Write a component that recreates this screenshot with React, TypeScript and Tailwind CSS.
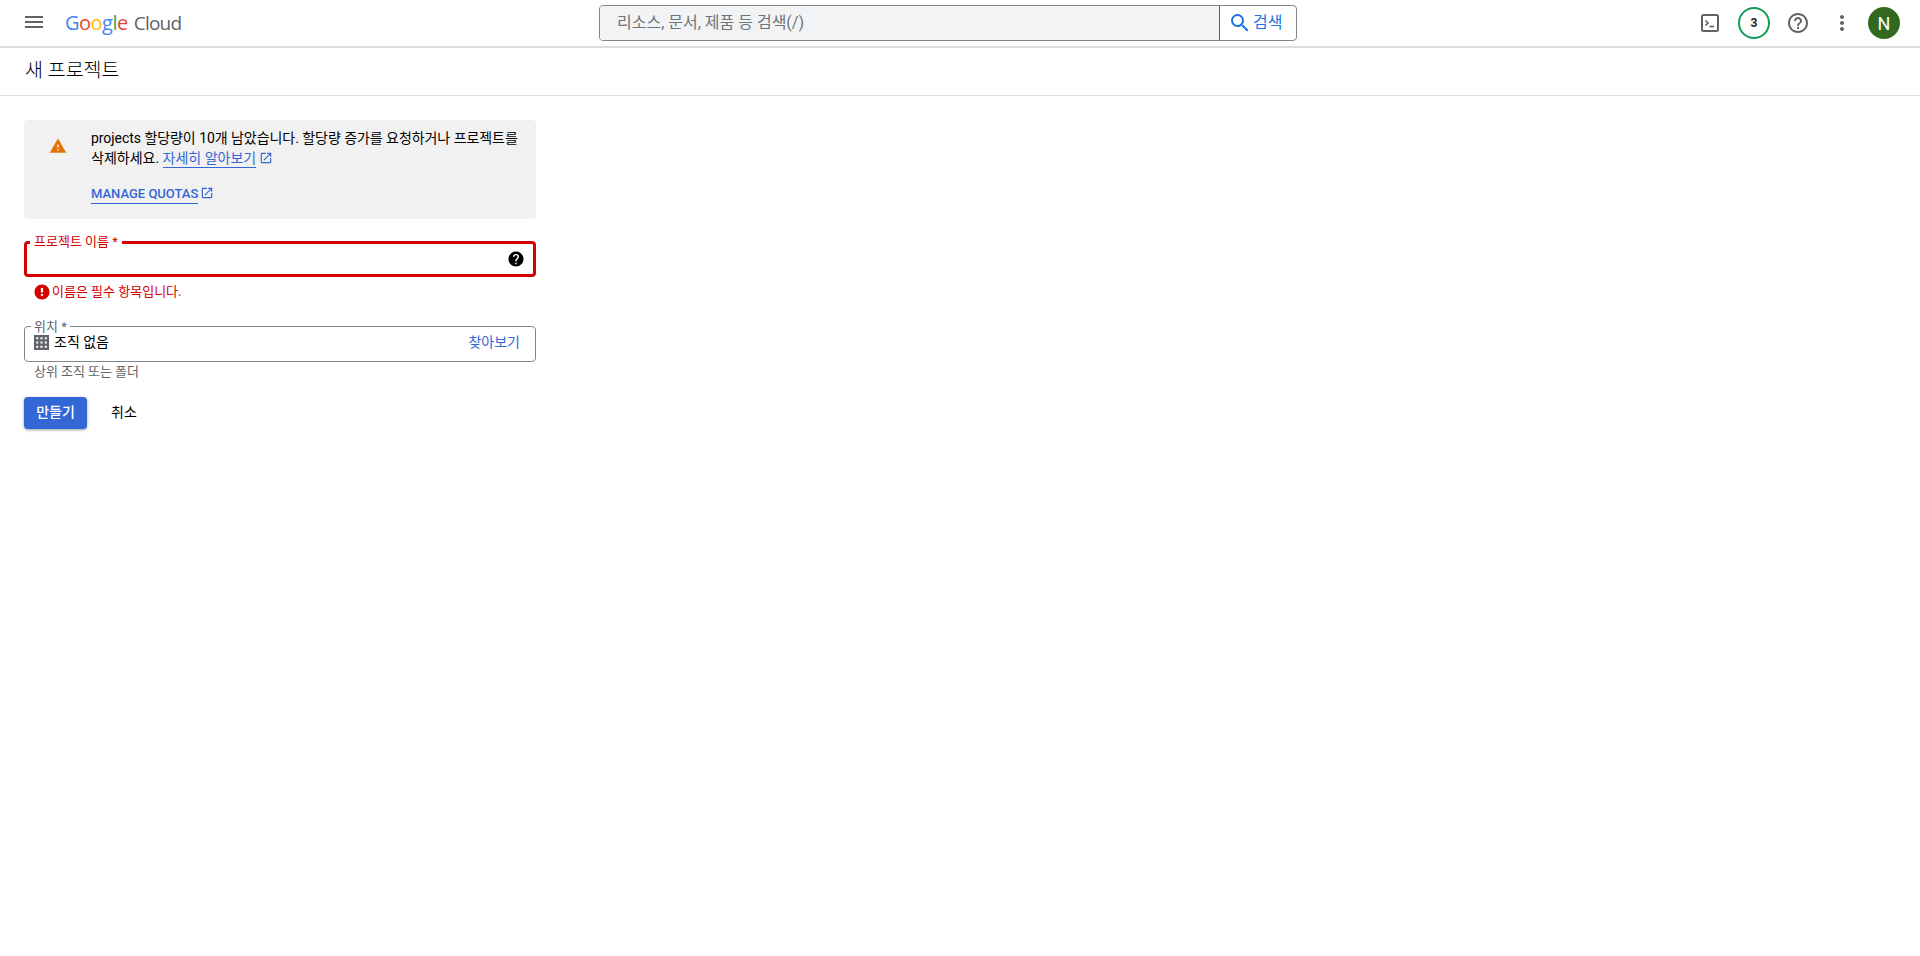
import React from "react";

const F = "font-['Roboto','Noto_Sans_CJK_KR',sans-serif]";

function Ext({ size = 14 }: { size?: number }) {
  return (
    <svg width={size} height={size} viewBox="0 0 24 24" fill="#3367d6" className="shrink-0">
      <path d="M19 19H5V5h7V3H5a2 2 0 0 0-2 2v14a2 2 0 0 0 2 2h14c1.1 0 2-.9 2-2v-7h-2v7zM14 3v2h3.59l-9.83 9.83 1.41 1.41L19 6.41V10h2V3h-7z" />
    </svg>
  );
}

function Slot({ children }: { children: React.ReactNode }) {
  return <div className="flex h-[44px] w-[44px] items-center justify-center">{children}</div>;
}

export default function App() {
  return (
    <div className={`${F} min-h-[956px] bg-white text-[14px] text-black`}>
      <header className="flex h-[48px] items-center border-b-2 border-[#dadce0]">
        <button className="ml-[24px] mb-[2px] flex h-[18px] w-[20px] items-center">
          <svg width="20" height="14" viewBox="0 0 20 14" fill="#5f6368">
            <rect x="1" y="1" width="18" height="2" />
            <rect x="1" y="6" width="18" height="2" />
            <rect x="1" y="11" width="18" height="2" />
          </svg>
        </button>
        <div className="ml-[21px] flex w-[116px] items-baseline text-[20px] leading-none font-['Open_Sans',sans-serif] tracking-[-0.5px]">
          <span className="text-[#4285f4]">G</span>
          <span className="text-[#ea4335]">o</span>
          <span className="text-[#fbbc05]">o</span>
          <span className="text-[#4285f4]">g</span>
          <span className="text-[#34a853]">l</span>
          <span className="text-[#ea4335]">e</span>
          <span className="ml-[6px] text-[19px] text-[#5f6368] tracking-[-0.8px]">Cloud</span>
        </div>
        <div className="ml-[418px] flex h-[36px] w-[698px] overflow-hidden rounded-[4px] border border-[#80868b]">
          <div className="flex flex-1 items-center bg-[#f1f3f4] pl-[17px] text-[16px] text-[#6f7478]">
            리소스, 문서, 제품 등 검색(/)
          </div>
          <div className="flex w-[77px] items-center border-l border-[#5f6368] pl-[10px] text-[16px] text-[#1a73e8]">
            <svg width="24" height="24" viewBox="0 0 24 24" fill="#1a73e8" className="shrink-0 -ml-[2px]">
              <path d="M15.5 14h-.79l-.28-.27A6.47 6.47 0 0 0 16 9.5 6.5 6.5 0 1 0 9.5 16c1.61 0 3.09-.59 4.23-1.57l.27.28v.79l5 4.99L20.49 19l-4.99-5zm-6 0C7.01 14 5 11.99 5 9.5S7.01 5 9.5 5 14 7.01 14 9.5 11.99 14 9.5 14z" />
            </svg>
            <span className="ml-[1px] whitespace-nowrap">검색</span>
          </div>
        </div>
        <div className="ml-auto flex items-center pr-[16px]">
          <Slot>
            <svg width="24" height="24" viewBox="0 0 24 24" fill="none" stroke="#5f6368" strokeWidth="2">
              <rect x="4" y="4" width="16" height="16" rx="1.5" />
              <path d="M7.5 9.5l2.5 2.5-2.5 2.5" strokeWidth="1.6" />
              <path d="M11.5 15.5h4.5" strokeWidth="1.6" />
            </svg>
          </Slot>
          <Slot>
            <div className="flex h-[32px] w-[32px] items-center justify-center rounded-full border-2 border-[#0f9d58] text-[12px] font-bold text-[#202124]">3</div>
          </Slot>
          <Slot>
            <svg width="24" height="24" viewBox="0 0 24 24" fill="#5f6368">
              <path d="M11 18h2v-2h-2v2zm1-16C6.48 2 2 6.48 2 12s4.48 10 10 10 10-4.48 10-10S17.52 2 12 2zm0 18c-4.41 0-8-3.59-8-8s3.59-8 8-8 8 3.59 8 8-3.59 8-8 8zm0-14c-2.21 0-4 1.79-4 4h2c0-1.1.9-2 2-2s2 .9 2 2c0 2-3 1.75-3 5h2c0-2.25 3-2.5 3-5 0-2.21-1.79-4-4-4z" />
            </svg>
          </Slot>
          <Slot>
            <svg width="24" height="24" viewBox="0 0 24 24" fill="#5f6368">
              <path d="M12 8c1.1 0 2-.9 2-2s-.9-2-2-2-2 .9-2 2 .9 2 2 2zm0 2c-1.1 0-2 .9-2 2s.9 2 2 2 2-.9 2-2-.9-2-2-2zm0 6c-1.1 0-2 .9-2 2s.9 2 2 2 2-.9 2-2-.9-2-2-2z" />
            </svg>
          </Slot>
          <div className="flex h-[44px] w-[40px] items-center justify-center">
            <div className="flex h-[32px] w-[32px] shrink-0 items-center justify-center rounded-full bg-[#33691e] text-[18px] text-white">N</div>
          </div>
        </div>
      </header>

      <div className="flex h-[48px] items-center border-b border-[#dadce0] pl-[25px] pb-[2px] text-[19.5px] font-light">새 프로젝트</div>

      <main className="ml-[24px] mt-[24px] w-[512px]">
        <div className="flex h-[99px] rounded-[4px] bg-[#f1f1f1]">
          <div className="ml-[25px] mt-[17px] w-[42px] shrink-0">
            <svg width="18" height="18" viewBox="0 0 24 24" fill="#e37400">
              <path d="M1 21h22L12 2 1 21zm12-3h-2v-2h2v2zm0-4h-2v-4h2v4z" />
            </svg>
          </div>
          <div className="pt-[8px] leading-[20px]">
            <p className="whitespace-nowrap tracking-[-0.05px]">projects 할당량이 10개 남았습니다. 할당량 증가를 요청하거나 프로젝트를</p>
            <p className="flex items-center">
              삭제하세요.&nbsp;
              <span className="border-b border-[#3367d6] leading-[18px] text-[#3367d6]">자세히 알아보기</span>
              <span className="ml-[3px]"><Ext /></span>
            </p>
            <p className="mt-[17px] flex items-start text-[13px] font-medium text-[#3367d6]">
              <span className="border-b border-[#3367d6] leading-[18px]">MANAGE QUOTAS</span>
              <span className="ml-[2px] mt-[1px]"><Ext /></span>
            </p>
          </div>
        </div>

        <div className="relative mt-[22px] flex h-[36px] items-center justify-end rounded-[4px] border-[3px] border-[#d50000] pr-[8px]">
          <span className="absolute left-[3px] top-[-9px] bg-white px-[4px] text-[13px] leading-[14px] text-[#d50000]">프로젝트 이름 *</span>
          <svg width="18" height="18" viewBox="0 0 24 24" fill="#000">
            <path d="M12 2C6.48 2 2 6.48 2 12s4.48 10 10 10 10-4.48 10-10S17.52 2 12 2zm1 17h-2v-2h2v2zm2.07-7.75l-.9.92C13.45 12.9 13 13.5 13 15h-2v-.5c0-1.1.45-2.1 1.17-2.83l1.24-1.26c.37-.36.59-.86.59-1.41 0-1.1-.9-2-2-2s-2 .9-2 2H8c0-2.21 1.79-4 4-4s4 1.79 4 4c0 .88-.36 1.68-.93 2.25z" />
          </svg>
        </div>
        <div className="mt-[7px] flex h-[16px] items-center pl-[9px] text-[13px] text-[#d50000]">
          <svg width="18" height="18" viewBox="0 0 24 24" fill="#d50000" className="mr-[1px] shrink-0">
            <path d="M12 2C6.48 2 2 6.48 2 12s4.48 10 10 10 10-4.48 10-10S17.52 2 12 2zm1.5 15h-3v-2.5h3V17zm0-4.5h-3V6.5h3v6z" />
          </svg>
          이름은 필수 항목입니다.
        </div>

        <div className="relative mt-[26px] flex h-[36px] rounded-[4px] border border-[#80868b] pl-[9px] pr-[15px] pt-[5px] leading-[20px]">
          <span className="absolute left-[6px] top-[-7px] bg-white px-[3px] text-[13px] leading-[14px] text-[#5f6368]">위치 *</span>
          <svg width="15" height="15" viewBox="0 0 14 14" className="mr-[5px] mt-[3px] shrink-0">
            <rect width="14" height="14" fill="#5f6368" />
            {[2, 6, 10].flatMap((x) => [3, 7, 11].map((y) => <rect key={`${x}-${y}`} x={x} y={y - 1} width="2" height="2" fill="#f1f1f1" />))}
          </svg>
          <span>조직 없음</span>
          <span className="ml-auto text-[#3367d6]">찾아보기</span>
        </div>
        <div className="mt-[2px] pl-[10px] text-[13px] leading-[16px] tracking-[-0.05px] text-[#5f6368]">상위 조직 또는 폴더</div>

        <div className="mt-[17px] flex items-center">
          <button className="h-[32px] w-[63px] rounded-[4px] bg-[#3367d6] pb-[2px] text-[14px] font-medium text-white shadow-[0_1px_3px_rgba(60,64,67,0.5)]">만들기</button>
          <button className="ml-[8px] h-[32px] w-[58px] pb-[2px] text-[14px] text-black">취소</button>
        </div>
      </main>
    </div>
  );
}
